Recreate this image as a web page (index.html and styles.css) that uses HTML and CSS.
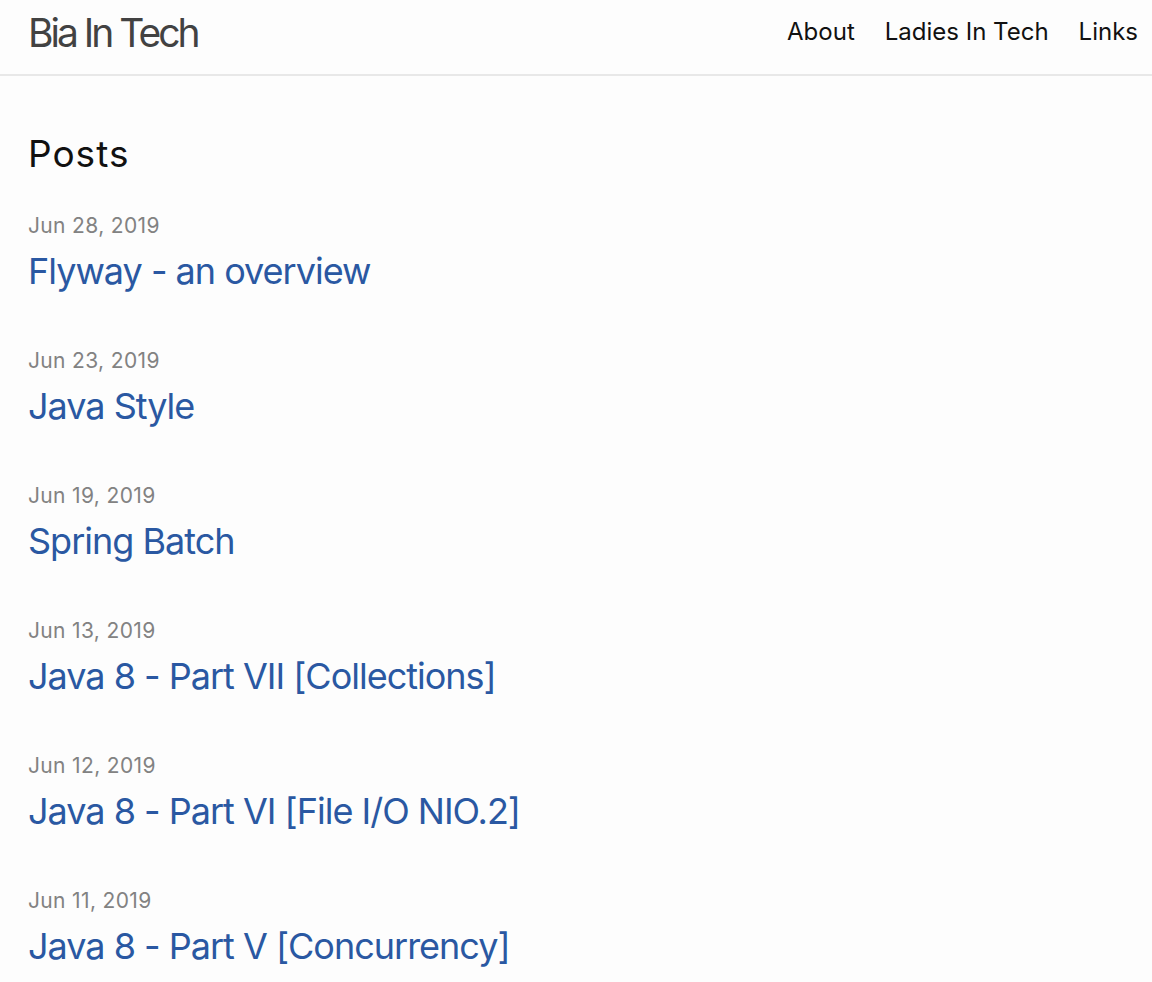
FILE: index.html
```html
<!DOCTYPE html>
<html lang="en">
<head>
<meta charset="utf-8">
<title>Bia In Tech</title>
<link rel="stylesheet" href="styles.css">
</head>
<body>
<header class="site-header">
  <a class="site-title" href="#">Bia In Tech</a>
  <nav class="site-nav">
    <a class="page-link" href="#">About</a>
    <a class="page-link" href="#">Ladies In Tech</a>
    <a class="page-link" href="#">Links</a>
  </nav>
</header>
<main class="page-content">
  <h2 class="post-list-heading">Posts</h2>
  <ul class="post-list">
    <li class="post-item">
      <span class="post-meta">Jun 28, 2019</span>
      <h3 class="post-title"><a class="post-link" href="#">Flyway - an overview</a></h3>
    </li>
    <li class="post-item">
      <span class="post-meta">Jun 23, 2019</span>
      <h3 class="post-title"><a class="post-link" href="#">Java Style</a></h3>
    </li>
    <li class="post-item">
      <span class="post-meta">Jun 19, 2019</span>
      <h3 class="post-title"><a class="post-link" href="#">Spring Batch</a></h3>
    </li>
    <li class="post-item">
      <span class="post-meta">Jun 13, 2019</span>
      <h3 class="post-title"><a class="post-link" href="#">Java 8 - Part VII [Collections]</a></h3>
    </li>
    <li class="post-item">
      <span class="post-meta">Jun 12, 2019</span>
      <h3 class="post-title"><a class="post-link" href="#">Java 8 - Part VI [File I/O NIO.2]</a></h3>
    </li>
    <li class="post-item">
      <span class="post-meta">Jun 11, 2019</span>
      <h3 class="post-title"><a class="post-link" href="#">Java 8 - Part V [Concurrency]</a></h3>
    </li>
  </ul>
</main>
</body>
</html>
```

FILE: styles.css
```css
* { box-sizing: border-box; }
html, body {
  margin: 0;
  padding: 0;
  background: #fdfdfd;
  color: #111111;
  font-family: Inter, "Noto Sans", sans-serif;
}
a { text-decoration: none; }

.site-header {
  height: 76px;
  border-bottom: 2px solid #e8e8e8;
  display: flex;
  justify-content: space-between;
  align-items: flex-start;
  padding: 0 14px 0 28px;
}
.site-title {
  font-size: 39px;
  line-height: 39px;
  letter-spacing: -3px;
  color: #424242;
  padding-top: 13px;
}
.site-nav {
  display: flex;
  gap: 30px;
  padding-top: 14px;
}
.page-link {
  font-size: 24px;
  line-height: 36px;
  color: #111111;
}

.page-content {
  padding: 55px 28px 0;
}
.post-list-heading {
  font-size: 37px;
  line-height: 46px;
  letter-spacing: 1px;
  font-weight: 400;
  margin: 0 0 33px;
}
.post-list {
  list-style: none;
  margin: 0;
  padding: 0;
}
.post-item {
  margin-bottom: 47px;
}
.post-meta {
  display: block;
  font-size: 21px;
  line-height: 32px;
  letter-spacing: 0.35px;
  color: #828282;
}
.post-title {
  margin: 2px 0 0;
  font-size: 36px;
  line-height: 54px;
  letter-spacing: -1px;
  font-weight: 400;
}
.post-link {
  color: #2a58a2;
}
```
